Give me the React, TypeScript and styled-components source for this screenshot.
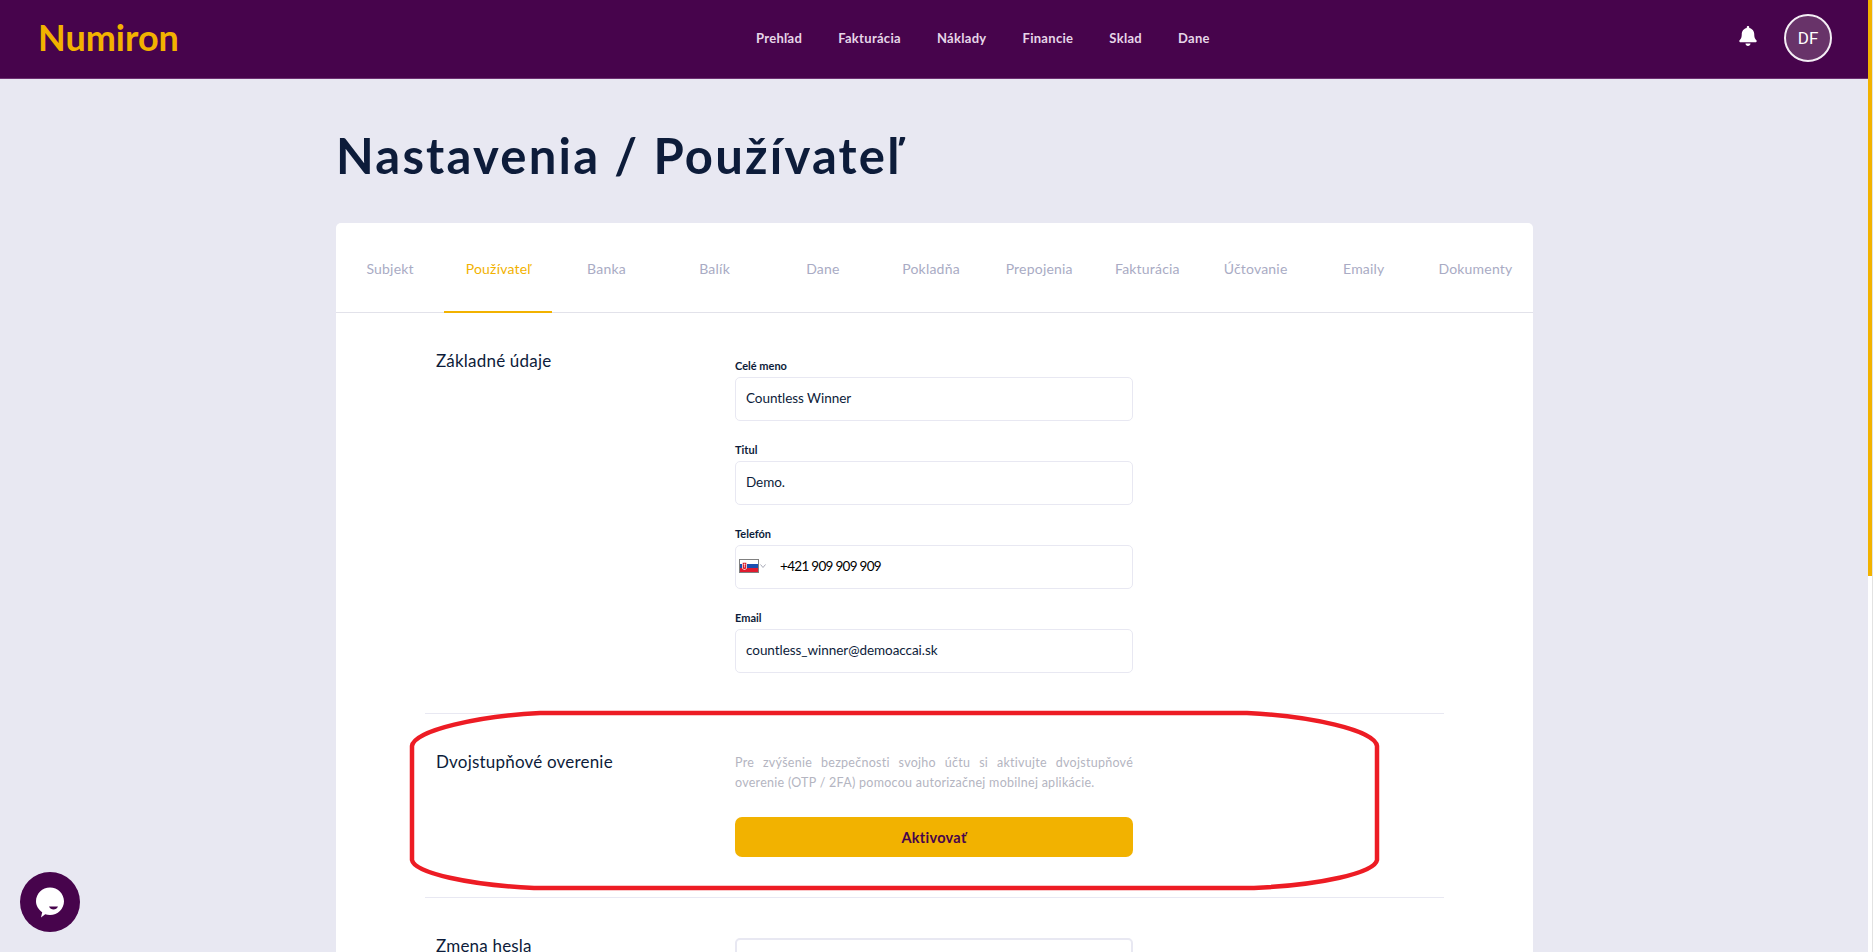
import styled, {createGlobalStyle} from 'styled-components';
import {FaBell} from 'react-icons/fa';

const GlobalStyle = createGlobalStyle`
  html, body {
    margin: 0;
    padding: 0;
    background: #e8e8f2;
  }
  * {
    box-sizing: border-box;
  }
  body {
    font-family: Lato, 'Noto Sans', sans-serif;
    color: #0d1c3a;
  }
`;

const navItems = ['Prehľad', 'Fakturácia', 'Náklady', 'Financie', 'Sklad', 'Dane'];
const tabs = [
  'Subjekt',
  'Používateľ',
  'Banka',
  'Balík',
  'Dane',
  'Pokladňa',
  'Prepojenia',
  'Fakturácia',
  'Účtovanie',
  'Emaily',
  'Dokumenty',
];

const Page = styled.div`
  position: relative;
  height: 100vh;
  overflow: hidden;
  background: #e8e8f2;
`;

const Header = styled.header`
  display: grid;
  grid-template-columns: 718px auto 1fr;
  align-items: center;
  height: 79px;
  padding: 0 41px 2px 38px;
  background: #47044c;
  border-bottom: 1px solid #6d3272;
`;

const Logo = styled.div`
  margin-top: -2px;
  font-size: 36px;
  font-weight: 700;
  line-height: 1;
  color: #f2b200;
`;

const Nav = styled.nav`
  display: flex;
  gap: 36px;
`;

const NavLink = styled.a`
  font-size: 13px;
  font-weight: 700;
  letter-spacing: 0.3px;
  color: #e6d6e8;
`;

const HeaderActions = styled.div`
  display: flex;
  justify-content: flex-end;
  align-items: center;
  gap: 26px;
  color: #fff;
  font-size: 20px;
`;

const BellWrap = styled.div`
  display: flex;
  margin-top: -4px;
`;

const Avatar = styled.div`
  display: flex;
  align-items: center;
  justify-content: center;
  width: 48px;
  height: 48px;
  border: 2px solid #f4eef5;
  border-radius: 50%;
  background: #683369;
  color: #fff;
  font-family: Roboto, sans-serif;
  font-size: 17px;
`;

const Main = styled.main`
  width: 1197px;
  margin-left: 336px;
`;

const Title = styled.h1`
  margin: 0;
  padding: 45px 0 37px;
  font-size: 49px;
  line-height: 62px;
  font-weight: 700;
  letter-spacing: 2.2px;
  color: #0d1c3a;
`;

const Card = styled.section`
  border-radius: 5px 5px 0 0;
  background: #fff;
`;

const Tabs = styled.div`
  display: grid;
  grid-template-columns: repeat(10, 108.2px) 1fr;
  height: 90px;
  border-bottom: 1px solid #e2e2ea;
`;

const Tab = styled.a<{$active?: boolean}>`
  display: flex;
  align-items: center;
  justify-content: center;
  margin-bottom: -1px;
  padding-top: 2px;
  font-size: 14px;
  letter-spacing: 0.2px;
  color: ${p => (p.$active ? '#f2b200' : '#a9abc4')};
  border-bottom: 2px solid ${p => (p.$active ? '#f2b200' : 'transparent')};
`;

const Sections = styled.div`
  padding: 0 89px;
`;

const Section = styled.div`
  display: grid;
  grid-template-columns: 299px 398px;
  padding: 37px 0 40px 11px;
  & + & {
    border-top: 1px solid #e8e8f2;
  }
`;

const SectionTitle = styled.h2`
  margin: 0;
  font-size: 17px;
  line-height: 22px;
  font-weight: 400;
  letter-spacing: 0.2px;
  color: #0d1c3a;
`;

const Fields = styled.div`
  display: flex;
  flex-direction: column;
  gap: 22px;
  padding-top: 9px;
`;

const Field = styled.div`
  display: flex;
  flex-direction: column;
  gap: 4px;
`;

const Label = styled.label`
  font-size: 11px;
  line-height: 14px;
  font-weight: 700;
  color: #0d1c3a;
`;

const InputBox = styled.div<{$thick?: boolean}>`
  display: flex;
  align-items: center;
  height: 44px;
  padding: 0 10px 3px;
  border: ${p => (p.$thick ? '2px' : '1px')} solid #e8e8f2;
  border-radius: 5px;
  background: #fff;
  font-size: 13.5px;
  letter-spacing: -0.05px;
  color: #0d1c3a;
`;

const PhoneBox = styled(InputBox)`
  padding-left: 3px;
  color: #000;
`;

const PhoneNumber = styled.span`
  margin-left: 13px;
  letter-spacing: -0.7px;
`;

const Description = styled.p`
  margin: 2px 0 24px;
  font-size: 12.5px;
  line-height: 20px;
  letter-spacing: 0.27px;
  text-align: justify;
  color: #b4b5c1;
`;

const PrimaryButton = styled.button`
  display: block;
  width: 100%;
  height: 40px;
  padding: 0;
  border: 0;
  border-radius: 7px;
  background: #f2b200;
  font-family: inherit;
  font-size: 14.5px;
  font-weight: 700;
  letter-spacing: 0.3px;
  color: #47044c;
`;

const PasswordColumn = styled.div`
  padding-top: 3px;
`;

const Annotation = styled.svg`
  position: absolute;
  left: 405px;
  top: 705px;
  width: 980px;
  height: 190px;
  pointer-events: none;
`;

const ChatButton = styled.div`
  position: fixed;
  left: 20px;
  top: 872px;
  display: flex;
  align-items: center;
  justify-content: center;
  width: 60px;
  height: 60px;
  border-radius: 50%;
  background: #47044c;
`;

const ScrollTrack = styled.div`
  position: fixed;
  top: 0;
  right: 0;
  bottom: 0;
  width: 5px;
  background: #fff;
  border-right: 1px solid #e2e2e2;
`;

const ScrollThumb = styled.div`
  height: 576px;
  background: #f2b200;
`;

const SlovakFlag = () => (
  <svg width="20" height="14" viewBox="0 0 20 14">
    <rect width="20" height="14" fill="#808080" />
    <rect x="1" y="1" width="18" height="4" fill="#fff" />
    <rect x="1" y="5" width="18" height="4" fill="#1c4fb0" />
    <rect x="1" y="9" width="18" height="4" fill="#e01b2f" />
    <path d="M3 3h5v5.500c0 1.200-1.200 2-2.500 2.500C4.200 10.500 3 9.700 3 8.500z" fill="#fff" />
    <path d="M3.700 3.700h3.600v4.700c0 .9-.9 1.500-1.800 1.900-.9-.4-1.800-1-1.800-1.900z" fill="#d9202f" />
    <path d="M5.200 4.500h.6v4h-.6zM4.500 5.500h2v.6h-2z" fill="#fff" />
  </svg>
);

const Chevron = () => (
  <svg width="8" height="6" viewBox="0 0 8 6" fill="none" stroke="#a9abb8" strokeWidth="1">
    <path d="M1.500 1.500 4 4.500l2.500-3" />
  </svg>
);

const ChatIcon = () => (
  <svg width="32" height="34" viewBox="0 0 32 34">
    <path
      d="M16 2.500c7.700 0 14 6.200 14 13.800s-6.300 13.800-14 13.800c-1.700 0-3.300-.3-4.800-.8L7 32.500l1.200-5.300C4.600 24.700 2 20.800 2 16.300 2 8.700 8.300 2.500 16 2.500z"
      fill="#fff"
    />
    <path d="M15 21.500h9c-.8 2-2.500 3-4.500 3s-3.700-1-4.500-3z" fill="#47044c" />
  </svg>
);

const RedEllipse = () => (
  <Annotation viewBox="405 705 980 190" fill="none">
    <path
      d="M540 713 L1247 713 C1310 716 1375 730 1377 746 L1377 860 C1375 873 1320 885 1254 888 L534 888 C470 885 414 873 412 860 L412 746 C414 730 480 716 540 713 Z"
      stroke="#ed1c24"
      strokeWidth="4.500"
    />
  </Annotation>
);

export default function App() {
  return (
    <Page>
      <GlobalStyle />
      <Header>
        <Logo>Numiron</Logo>
        <Nav>
          {navItems.map(item => (
            <NavLink key={item}>{item}</NavLink>
          ))}
        </Nav>
        <HeaderActions>
          <BellWrap>
            <FaBell />
          </BellWrap>
          <Avatar>DF</Avatar>
        </HeaderActions>
      </Header>
      <Main>
        <Title>Nastavenia / Používateľ</Title>
        <Card>
          <Tabs>
            {tabs.map(tab => (
              <Tab key={tab} $active={tab === 'Používateľ'}>
                {tab}
              </Tab>
            ))}
          </Tabs>
          <Sections>
            <Section>
              <SectionTitle>Základné údaje</SectionTitle>
              <Fields>
                <Field>
                  <Label>Celé meno</Label>
                  <InputBox>Countless Winner</InputBox>
                </Field>
                <Field>
                  <Label>Titul</Label>
                  <InputBox>Demo.</InputBox>
                </Field>
                <Field>
                  <Label>Telefón</Label>
                  <PhoneBox>
                    <SlovakFlag />
                    <Chevron />
                    <PhoneNumber>+421 909 909 909</PhoneNumber>
                  </PhoneBox>
                </Field>
                <Field>
                  <Label>Email</Label>
                  <InputBox>countless_winner@demoaccai.sk</InputBox>
                </Field>
              </Fields>
            </Section>
            <Section>
              <SectionTitle>Dvojstupňové overenie</SectionTitle>
              <div>
                <Description>
                  Pre zvýšenie bezpečnosti svojho účtu si aktivujte dvojstupňové overenie (OTP / 2FA)
                  pomocou autorizačnej mobilnej aplikácie.
                </Description>
                <PrimaryButton>Aktivovať</PrimaryButton>
              </div>
            </Section>
            <Section>
              <SectionTitle>Zmena hesla</SectionTitle>
              <PasswordColumn>
                <InputBox $thick />
              </PasswordColumn>
            </Section>
          </Sections>
        </Card>
      </Main>
      <RedEllipse />
      <ChatButton>
        <ChatIcon />
      </ChatButton>
      <ScrollTrack>
        <ScrollThumb />
      </ScrollTrack>
    </Page>
  );
}
